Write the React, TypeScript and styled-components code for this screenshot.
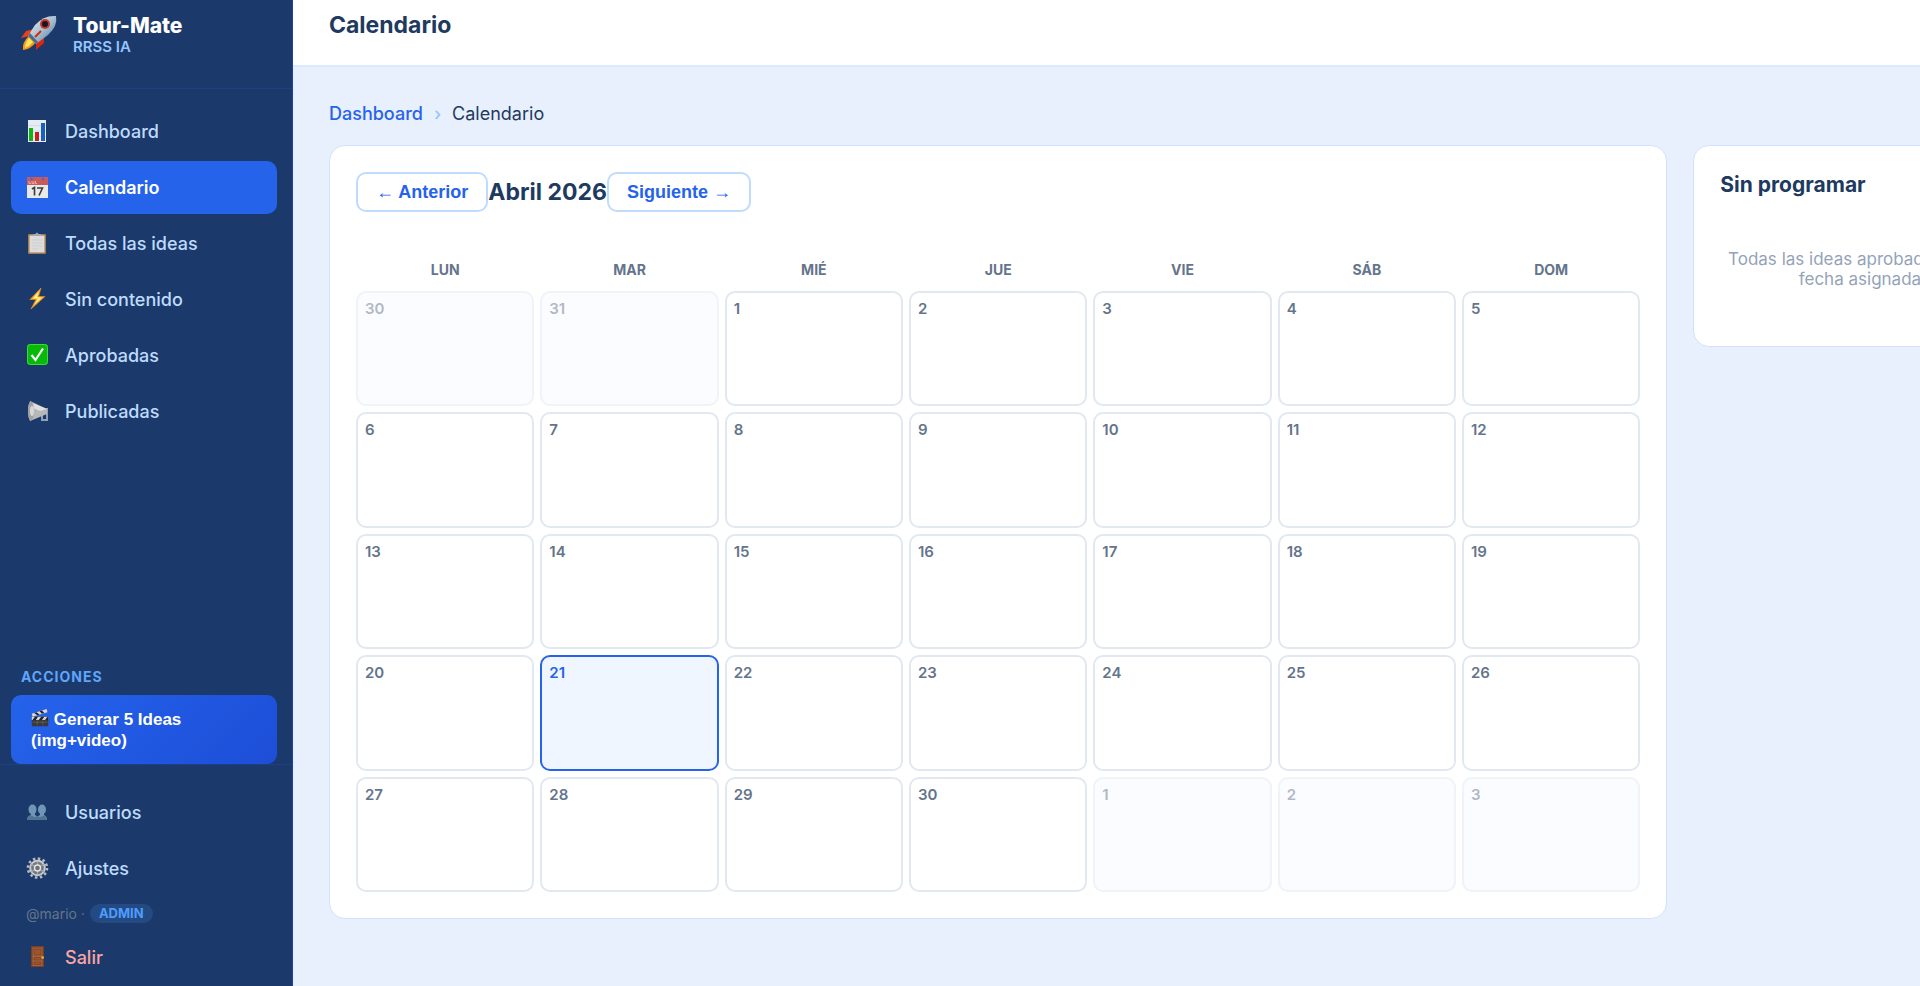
import React from "react";
import styled, { createGlobalStyle, css } from "styled-components";

const GlobalStyle = createGlobalStyle`
  *, *::before, *::after { box-sizing: border-box; }
  body {
    margin: 0;
    background: #e8effd;
    color: #1e3a5f;
    font-family: Inter, "Liberation Sans", sans-serif;
    font-size: 18px;
    line-height: 22px;
  }
  h1, h2, h3, p, ul { margin: 0; padding: 0; }
  ul { list-style: none; }
  a { color: inherit; text-decoration: none; }
  button { font-family: "Liberation Sans", Arial, sans-serif; cursor: pointer; }
`;

const Shell = styled.div`
  display: flex;
  height: 100vh;
  overflow: hidden;
`;

const Sidebar = styled.aside`
  display: flex;
  flex-direction: column;
  flex: 0 0 293px;
  background: #1b3a6b;
  border-right: 1px solid #1e40af;
  color: #bfdbfe;
`;

const Brand = styled.div`
  display: flex;
  align-items: flex-start;
  gap: 15px;
  height: 89px;
  padding: 14px 20px 0;
  border-bottom: 1px solid #1e3f86;
`;

const BrandName = styled.div`
  color: #fff;
  font-size: 21px;
  font-weight: 800;
  line-height: 24px;
`;

const BrandTag = styled.div`
  color: #93c5fd;
  font-size: 15px;
  font-weight: 600;
  line-height: 18px;
`;

const Nav = styled.nav`
  flex: 1;
  padding: 16px 15px 0 11px;
`;

const NavList = styled.ul`
  display: flex;
  flex-direction: column;
  gap: 3px;
`;

const NavLink = styled.a<{ $active?: boolean; $danger?: boolean }>`
  display: flex;
  align-items: center;
  gap: 16px;
  height: 53px;
  padding: 0 15px;
  border-radius: 10px;
  font-weight: 500;
  ${(p) => p.$danger && css`color: #fca5a5;`}
  ${(p) => p.$active && css`background: #2563eb; color: #fff; font-weight: 600;`}
`;

const Actions = styled.section`
  padding: 0 15px 0 11px;
`;

const ActionsTitle = styled.h3`
  padding: 0 10px 9px;
  color: #60a5fa;
  font-size: 14px;
  font-weight: 700;
  line-height: 18px;
  letter-spacing: 1px;
`;

const GenerateButton = styled.button`
  display: block;
  width: 100%;
  padding: 14px 20px 13px;
  border: 0;
  border-radius: 10px;
  background: linear-gradient(135deg, #2563eb, #1d4ed8);
  color: #fff;
  font-size: 17px;
  font-weight: 700;
  line-height: 21px;
  text-align: left;
  svg { vertical-align: -2px; }
`;

const Footer = styled.footer`
  padding: 21px 15px 2px 11px;
  border-top: 1px solid #1e3f86;
`;

const UserRow = styled.div`
  display: flex;
  align-items: center;
  gap: 5px;
  padding: 9px 15px 8px;
  color: #64748b;
  font-size: 14px;
  line-height: 19px;
`;

const RoleBadge = styled.span`
  padding: 0 9px;
  border-radius: 10px;
  background: #234a82;
  color: #4f9cff;
  font-size: 13px;
  font-weight: 700;
`;

const Main = styled.main`
  flex: 1;
  min-width: 0;
  overflow: hidden;
`;

const Topbar = styled.header`
  height: 67px;
  padding: 10px 36px 0;
  background: #fff;
  border-bottom: 2px solid #dbeafe;
`;

const PageTitle = styled.h1`
  font-size: 23px;
  font-weight: 700;
  line-height: 30px;
`;

const Content = styled.div`
  padding: 36px 0 0 36px;
`;

const Breadcrumb = styled.nav`
  display: flex;
  gap: 11px;
  margin-bottom: 20px;
  a { color: #2563eb; font-weight: 500; }
`;

const Separator = styled.span`
  color: #93c5fd;
  font-weight: 500;
`;

/* The planner runs past the right edge and is clipped there. */
const Planner = styled.div`
  display: grid;
  grid-template-columns: minmax(0, 1fr) 338px;
  align-items: start;
  gap: 26px;
  width: 107%;
`;

const Card = styled.section`
  padding: 26px;
  background: #fff;
  border: 1px solid #cfe3fe;
  border-radius: 16px;
`;

const MonthBar = styled.div`
  display: flex;
  align-items: center;
  margin-bottom: 44px;
`;

const MonthButton = styled.button`
  height: 40px;
  padding: 0 18px;
  background: #fff;
  border: 2px solid #bfdbfe;
  border-radius: 10px;
  color: #2563eb;
  font-size: 18px;
  font-weight: 700;
`;

const Arrow = styled.span`
  font-weight: 400;
`;

const MonthTitle = styled.h2`
  font-size: 23px;
  font-weight: 700;
  line-height: 30px;
`;

const MonthTable = styled.table`
  display: block;
  thead { display: block; margin-bottom: 8px; }
  tbody { display: grid; grid-auto-rows: 1fr; gap: 6px; min-height: 601px; }
`;

const Week = styled.tr`
  display: grid;
  grid-template-columns: repeat(7, minmax(0, 1fr));
  gap: 6px;
`;

const WeekdayCell = styled.th`
  padding: 0;
  color: #64748b;
  font-size: 14px;
  font-weight: 700;
  line-height: 27px;
`;

const DayCell = styled.td<{ $outside?: boolean; $today?: boolean }>`
  padding: 6px 7px;
  border: 2px solid #e2e8f0;
  border-radius: 10px;
  color: #64748b;
  font-size: 15px;
  font-weight: 600;
  line-height: 20px;
  ${(p) => p.$outside && css`background: #f8faff; opacity: 0.5;`}
  ${(p) => p.$today && css`background: #eff6ff; border-color: #2563eb; color: #2563eb;`}
`;

const PanelTitle = styled.h2`
  margin-bottom: 51px;
  font-size: 21px;
  font-weight: 700;
  line-height: 26px;
`;

const EmptyNote = styled.p`
  padding-bottom: 31px;
  color: #94a3b8;
  font-size: 17px;
  line-height: 20px;
  text-align: center;
`;

const Rocket = () => (
  <svg width="38" height="38" viewBox="0 0 38 38" aria-hidden="true">
    <defs>
      <linearGradient id="hull" x1="0" y1="0" x2="1" y2="1">
        <stop offset="0" stopColor="#eef3f7" />
        <stop offset="0.5" stopColor="#a9c0d1" />
        <stop offset="1" stopColor="#3f6f96" />
      </linearGradient>
    </defs>
    <path d="M14 15 L6 17 L1 24 L10 22 Z" fill="#e8401c" />
    <path d="M24 22 L24 29 L16 36 L16 27 Z" fill="#d6280f" />
    <path d="M9 22 Q2 28 3 36 Q11 35 16 28 Z" fill="#f59a1b" />
    <path d="M9 24 Q5 29 5 34 Q10 32 13 28 Z" fill="#ffe45c" />
    <path d="M36 2 Q38 12 28 21 L16 30 L8 22 L15 11 Q24 1 36 2 Z" fill="url(#hull)" />
    <path d="M8 22 L16 30 L18 28 L10 19 Z" fill="#4b6d87" />
    <circle cx="25" cy="10" r="5" fill="#c7382c" />
    <circle cx="25" cy="10" r="3" fill="#16181d" />
    <path d="M15 23 L21 17" stroke="#d6280f" strokeWidth="2" />
  </svg>
);

const Icon = ({ size = 23, children }: { size?: number; children: React.ReactNode }) => (
  <svg width={size} height={size} viewBox="0 0 23 23" aria-hidden="true">{children}</svg>
);

const ChartIcon = () => (
  <Icon>
    <rect x="2" y="0" width="18" height="22" fill="#e6ecf3" />
    <path d="M2 5.500H20M2 11H20M2 16.500H20" stroke="#c5d3e2" strokeWidth="0.600" />
    <rect x="3" y="8" width="4" height="13" fill="#12b312" />
    <rect x="9" y="12" width="4" height="9" fill="#c5221a" />
    <rect x="15" y="3" width="4" height="18" fill="#1560c0" />
  </Icon>
);

const CalendarIcon = () => (
  <Icon>
    <rect x="1" y="1" width="21" height="21" fill="#e9e9e9" />
    <rect x="1" y="1" width="21" height="8" fill="#c85a58" />
    <circle cx="5.500" cy="3" r="1.200" fill="#4a5fd0" />
    <circle cx="17" cy="3" r="1.200" fill="#4a5fd0" />
    <path d="M3 5V7.500H5M6 5V7.500H8V5M9.500 5V7.500H11" fill="none" stroke="#eaa9a6" />
    <path d="M6 13L8.500 11.500V19.500M11 12H16.500L13 19.500" fill="none" stroke="#3b3b3b" strokeWidth="1.600" />
  </Icon>
);

const ClipboardIcon = () => (
  <Icon>
    <rect x="2" y="2" width="18" height="20" rx="1" fill="#a5794a" />
    <rect x="3.500" y="3.500" width="15" height="17" fill="#dcdcdc" />
    <path d="M6 8H16M6 11H16M6 14H16M6 17H13" stroke="#cfcfcf" />
    <path d="M7 4V2H9.500Q11 -1 12.500 2H15V4Z" fill="#9eabb5" />
  </Icon>
);

const BoltIcon = () => (
  <Icon>
    <path d="M15 0L4 11.500H10L5 21L19 8.500H12.500Z" fill="#fbb62c" stroke="#e88a12" strokeWidth="0.700" />
    <path d="M13 3L7 10.500H12L8 17L16 9.500H11Z" fill="#fff0a0" />
  </Icon>
);

const CheckIcon = () => (
  <Icon>
    <rect x="1" y="0" width="21" height="21" rx="3" fill="#08ba08" />
    <rect x="1.500" y="0.500" width="20" height="20" rx="3" fill="none" stroke="#43d543" />
    <path d="M5.500 11L9.500 16L17 4.500" fill="none" stroke="#fff" strokeWidth="2.200" />
  </Icon>
);

const MegaphoneIcon = () => (
  <Icon>
    <path d="M15 9H21V20H16V13" fill="none" stroke="#8ea3b8" strokeWidth="2" />
    <path d="M4 1L21 9V14L4 21Q2 17 2 11T4 1Z" fill="#b8b8b8" />
    <path d="M4 2L21 9L14 11L5 7Z" fill="#e0e0e0" />
    <ellipse cx="5" cy="11" rx="3" ry="9.500" fill="#a2a2a2" />
    <ellipse cx="6" cy="11" rx="2" ry="5" fill="#d8d8d8" />
  </Icon>
);

const UsersIcon = () => (
  <Icon>
    <g fill="#6f97b5">
      <ellipse cx="6.500" cy="8.500" rx="4" ry="5" />
      <path d="M1 19Q1 15 5 14V11H9V14Q12 15 12 19Z" />
      <ellipse cx="16" cy="8.500" rx="4" ry="5" />
      <path d="M11 19Q11 15 14 14V11H18V14Q21 15 21 19Z" />
    </g>
    <path d="M1 19Q1 15.500 5 14.500Q9 17 11 15Q14 17 18 14.500Q21 15.500 21 19Z" fill="#4f7593" />
  </Icon>
);

const GearIcon = () => (
  <Icon>
    <circle cx="11.500" cy="11" r="9.500" fill="none" stroke="#b5bac0" strokeWidth="2.600" strokeDasharray="2.500 2.470" />
    <circle cx="11.500" cy="11" r="7.300" fill="#71777d" stroke="#c7cace" strokeWidth="2" />
    <path d="M11.500 4V18M5 7L18 15M5 15L18 7" stroke="#a5aaaf" strokeWidth="1.200" />
    <circle cx="11.500" cy="11" r="3" fill="#6c7177" stroke="#e4e5e7" strokeWidth="1.400" />
  </Icon>
);

const DoorIcon = () => (
  <Icon>
    <rect x="5" y="0" width="13" height="21" fill="#794020" />
    <rect x="6.500" y="1.500" width="10" height="18.500" fill="#a9633c" />
    <path d="M8 3H15V9H8ZM8 11.500H15V14H8ZM8 16H15V18.500H8Z" fill="#9b5430" stroke="#7f4324" strokeWidth="0.800" />
    <circle cx="16.700" cy="11.500" r="1.300" fill="#e6b93d" />
  </Icon>
);

const ClapperIcon = () => (
  <Icon size={18}>
    <rect x="1" y="10" width="21" height="12" rx="1" fill="#3a3a3a" />
    <path d="M1 6L20 0L21 4L2 10Z" fill="#d8d8d8" />
    <path d="M4 5L8 8L11 7L7 4ZM11 3L14 6L17 5L14 2Z" fill="#222" />
    <path d="M1 10H22V14H1Z" fill="#d8d8d8" />
    <path d="M2 14L5 10H9L6 14ZM10 14L13 10H17L14 14ZM18 14L21 10H22V14Z" fill="#222" />
    <path d="M2 17H21M8 15V21M15 15V21" stroke="#686868" strokeWidth="0.800" />
  </Icon>
);

const links = [
  { label: "Dashboard", icon: <ChartIcon /> },
  { label: "Calendario", icon: <CalendarIcon />, active: true },
  { label: "Todas las ideas", icon: <ClipboardIcon /> },
  { label: "Sin contenido", icon: <BoltIcon /> },
  { label: "Aprobadas", icon: <CheckIcon /> },
  { label: "Publicadas", icon: <MegaphoneIcon /> },
];

const weekdays = ["LUN", "MAR", "MIÉ", "JUE", "VIE", "SÁB", "DOM"];

const monthStart = new Date(2026, 3, 1);
const leading = (monthStart.getDay() + 6) % 7;
const weeks = Array.from({ length: 5 }, (_, w) =>
  Array.from({ length: 7 }, (_, d) => {
    const date = new Date(2026, 3, 1 - leading + w * 7 + d);
    const outside = date.getMonth() !== 3;
    return { day: date.getDate(), outside, today: !outside && date.getDate() === 21 };
  })
);

export default function App() {
  return (
    <>
      <GlobalStyle />
      <Shell>
        <Sidebar>
          <Brand>
            <Rocket />
            <div>
              <BrandName>Tour-Mate</BrandName>
              <BrandTag>RRSS IA</BrandTag>
            </div>
          </Brand>
          <Nav>
            <NavList>
              {links.map((l) => (
                <li key={l.label}>
                  <NavLink href="#" $active={l.active}>{l.icon}{l.label}</NavLink>
                </li>
              ))}
            </NavList>
          </Nav>
          <Actions>
            <ActionsTitle>ACCIONES</ActionsTitle>
            <GenerateButton type="button"><ClapperIcon /> Generar 5 Ideas<br />(img+video)</GenerateButton>
          </Actions>
          <Footer>
            <NavList>
              <li><NavLink href="#"><UsersIcon />Usuarios</NavLink></li>
              <li><NavLink href="#"><GearIcon />Ajustes</NavLink></li>
            </NavList>
            <UserRow><span>@mario ·</span><RoleBadge>ADMIN</RoleBadge></UserRow>
            <NavLink href="#" $danger><DoorIcon />Salir</NavLink>
          </Footer>
        </Sidebar>
        <Main>
          <Topbar><PageTitle>Calendario</PageTitle></Topbar>
          <Content>
            <Breadcrumb>
              <a href="#">Dashboard</a>
              <Separator>›</Separator>
              <span>Calendario</span>
            </Breadcrumb>
            <Planner>
              <Card>
                <MonthBar>
                  <MonthButton type="button"><Arrow>←</Arrow> Anterior</MonthButton>
                  <MonthTitle>Abril 2026</MonthTitle>
                  <MonthButton type="button">Siguiente <Arrow>→</Arrow></MonthButton>
                </MonthBar>
                <MonthTable>
                  <thead>
                    <Week>{weekdays.map((d) => <WeekdayCell key={d} scope="col">{d}</WeekdayCell>)}</Week>
                  </thead>
                  <tbody>
                    {weeks.map((week, i) => (
                      <Week key={i}>
                        {week.map((c, j) => (
                          <DayCell key={j} $outside={c.outside} $today={c.today}>{c.day}</DayCell>
                        ))}
                      </Week>
                    ))}
                  </tbody>
                </MonthTable>
              </Card>
              <Card>
                <PanelTitle>Sin programar</PanelTitle>
                <EmptyNote>Todas las ideas aprobadas tienen fecha asignada.</EmptyNote>
              </Card>
            </Planner>
          </Content>
        </Main>
      </Shell>
    </>
  );
}
